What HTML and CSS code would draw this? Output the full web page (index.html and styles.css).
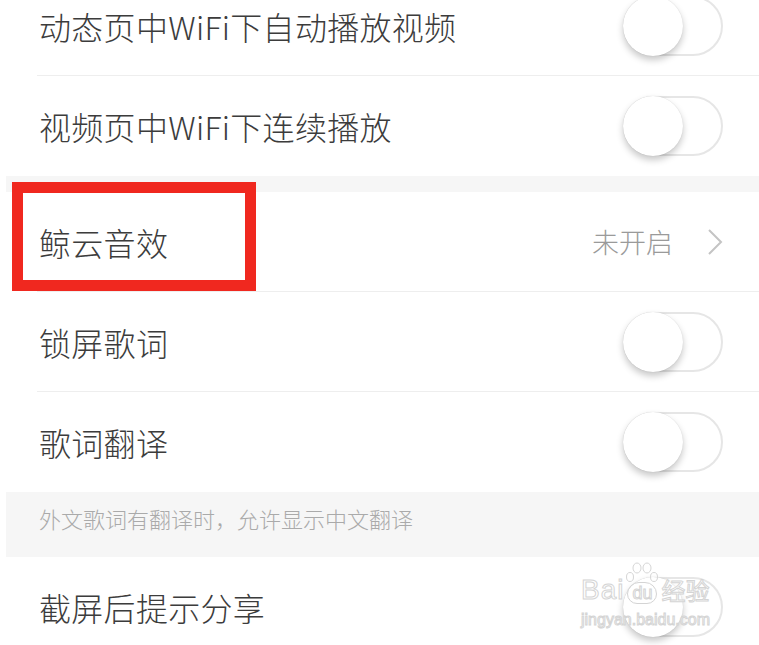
FILE: index.html
```html
<!DOCTYPE html>
<html lang="zh-CN">
  <head>
    <meta charset="UTF-8" />
    <meta name="viewport" content="width=device-width, initial-scale=1.0" />
    <title>设置</title>
    <link rel="stylesheet" href="styles.css">
  </head>
  <body>
    <div class="settings">
      <div class="group">
        <div class="row">
          <span class="label">动态页中WiFi下自动播放视频</span>
          <span class="switch"><span class="knob"></span></span>
        </div>
        <div class="row">
          <span class="label">视频页中WiFi下连续播放</span>
          <span class="switch"><span class="knob"></span></span>
        </div>
      </div>

      <div class="group">
        <div class="row">
          <span class="label">鲸云音效</span>
          <span class="value">未开启</span>
          <svg class="chevron" width="16" height="28" viewBox="0 0 16 28">
            <polyline points="2,2 14,14 2,26" fill="none" stroke="#c4c4c4" stroke-width="2" />
          </svg>
        </div>
        <div class="row">
          <span class="label">锁屏歌词</span>
          <span class="switch"><span class="knob"></span></span>
        </div>
        <div class="row">
          <span class="label">歌词翻译</span>
          <span class="switch"><span class="knob"></span></span>
        </div>
      </div>
      <div class="note">外文歌词有翻译时，允许显示中文翻译</div>

      <div class="group">
        <div class="row">
          <span class="label">截屏后提示分享</span>
          <span class="switch"><span class="knob"></span></span>
        </div>
      </div>
    </div>

    <!-- highlight frame drawn over the screenshot -->
    <div class="highlight"></div>

    <div class="watermark">
      <div class="wm-top">
        <span class="wm-bai">Bai</span>
        <span class="wm-paw">
          <svg class="wm-toes" width="34" height="22" viewBox="0 0 34 22">
            <g fill="none" stroke="#d6d6d6" stroke-width="1">
              <ellipse cx="5" cy="15" rx="3.5" ry="4.5" />
              <ellipse cx="12" cy="6" rx="4" ry="5" />
              <ellipse cx="22" cy="6" rx="4" ry="5" />
              <ellipse cx="29" cy="15" rx="3.5" ry="4.5" />
            </g>
          </svg>
          <span class="wm-du">du</span>
        </span>
        <span class="wm-jy">经验</span>
      </div>
      <div class="wm-url">jingyan.baidu.com</div>
    </div>
  </body>
</html>
```

FILE: styles.css
```css
body {
  margin: 0;
  padding: 0;
  background-color: #fff;
  font-family: "Noto Sans CJK SC", "Noto Sans", sans-serif;
  color: #3c3c3c;
  overflow: hidden;
}

.settings {
  margin-top: -24px;
  margin-left: 6px;
  background-color: #f6f6f6;
}

.group {
  background-color: #fff;
}

.group + .group {
  margin-top: 16px;
}

.row {
  box-sizing: border-box;
  height: 100px;
  margin-left: 31px;
  padding: 0 36px 0 2px;
  display: flex;
  align-items: center;
  border-bottom: 1px solid #eeeeee;
}

.row:last-child {
  border-bottom: none;
}

.label {
  flex: 1;
  font-size: 32px;
  font-weight: 300;
  line-height: 40px;
  letter-spacing: 0.3px;
  color: #3c3c3c;
}

.value {
  font-size: 27px;
  font-weight: 300;
  color: #9a9a9a;
  margin-right: 34px;
}

.chevron {
  display: block;
}

.switch {
  position: relative;
  box-sizing: border-box;
  width: 100px;
  height: 60px;
  border: 2px solid #e6e6e6;
  border-radius: 30px;
  background-color: #fff;
}

.knob {
  position: absolute;
  left: -2px;
  top: -2px;
  width: 60px;
  height: 60px;
  border-radius: 50%;
  background-color: #fff;
  box-shadow: 0 4px 7px rgba(0, 0, 0, 0.22), 0 0 1px rgba(0, 0, 0, 0.15);
}

.note {
  height: 65px;
  box-sizing: border-box;
  padding: 13px 0 0 33px;
  font-size: 22px;
  font-weight: 300;
  line-height: 26px;
  color: #aaa;
}

.highlight {
  position: absolute;
  left: 12px;
  top: 182px;
  width: 244px;
  height: 109px;
  box-sizing: border-box;
  border: 11px solid #f0281f;
}

.watermark {
  position: absolute;
  left: 581px;
  top: 562px;
  white-space: nowrap;
  color: rgba(255, 255, 255, 0.7);
  -webkit-text-stroke: 1px #d4d4d4;
  font-family: "Liberation Sans", "Noto Sans CJK SC", sans-serif;
}

.wm-top {
  display: flex;
  align-items: flex-end;
  height: 42px;
}

.wm-bai {
  font-size: 28px;
  line-height: 28px;
  letter-spacing: 1px;
}

.wm-paw {
  display: flex;
  flex-direction: column;
  align-items: center;
  margin: 0 2px 0 1px;
}

.wm-toes {
  display: block;
  margin-bottom: -2px;
}

.wm-du {
  display: block;
  font-size: 18px;
  line-height: 20px;
  padding: 0 4px;
  border: 1px solid #d4d4d4;
  border-radius: 12px 12px 10px 10px;
}

.wm-jy {
  font-family: "Noto Sans CJK SC", sans-serif;
  font-size: 24px;
  line-height: 28px;
}

.wm-url {
  margin-top: 6px;
  font-size: 16px;
  line-height: 20px;
}
```
